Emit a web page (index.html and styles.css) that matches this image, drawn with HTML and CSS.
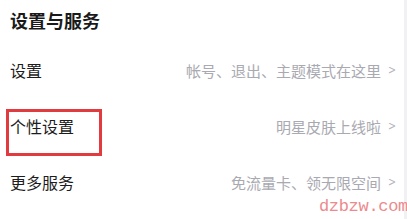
FILE: index.html
```html
<!DOCTYPE html>
<html lang="zh">
<head>
<meta charset="utf-8">
<link rel="stylesheet" href="styles.css">
</head>
<body>
<div class="page">
  <div class="panel">
    <h2 class="title">设置与服务</h2>
    <div class="row">
      <span class="label">设置</span>
      <span class="desc">帐号、退出、主题模式在这里<span class="chev">&gt;</span></span>
    </div>
    <div class="row highlight">
      <span class="label">个性设置</span>
      <span class="desc">明星皮肤上线啦<span class="chev">&gt;</span></span>
      <span class="mark"></span>
    </div>
    <div class="row">
      <span class="label">更多服务</span>
      <span class="desc">免流量卡、领无限空间<span class="chev">&gt;</span></span>
    </div>
    <div class="watermark">dzbzw.com</div>
  </div>
  <div class="edge"></div>
</div>
</body>
</html>
```
FILE: styles.css
```css
html, body {
  margin: 0;
  padding: 0;
  background: #ffffff;
}
.page {
  display: flex;
  width: 407px;
  height: 219px;
  overflow: hidden;
}
.panel {
  position: relative;
  flex: 1;
  padding: 0 0 0 10px;
  font-family: "Noto Sans CJK SC", "Noto Sans", sans-serif;
}
.edge {
  width: 3px;
  background: #f1f1f3;
}
.title {
  margin: 0;
  padding-top: 5px;
  height: 37px;
  font-size: 18px;
  font-weight: 700;
  line-height: 30px;
  color: #1a1a1a;
}
.row {
  position: relative;
  display: flex;
  align-items: center;
  justify-content: space-between;
  height: 56px;
  padding-right: 7px;
}
.label {
  font-size: 16px;
  color: #1c1c1c;
}
.desc {
  display: flex;
  align-items: center;
  font-size: 15px;
  color: #a9a9b1;
}
.chev {
  margin-left: 6px;
  font-family: "DejaVu Sans", sans-serif;
  font-size: 12px;
  color: #b4b4bb;
  transform: scaleX(0.8);
}
.mark {
  position: absolute;
  left: -4px;
  top: 11px;
  width: 90px;
  height: 41px;
  border: 3px solid #e23b3f;
}
.watermark {
  position: absolute;
  right: -4px;
  bottom: 3px;
  font-family: "Liberation Mono", monospace;
  font-size: 17px;
  color: #ec8a8d;
  letter-spacing: -0.3px;
}
```
